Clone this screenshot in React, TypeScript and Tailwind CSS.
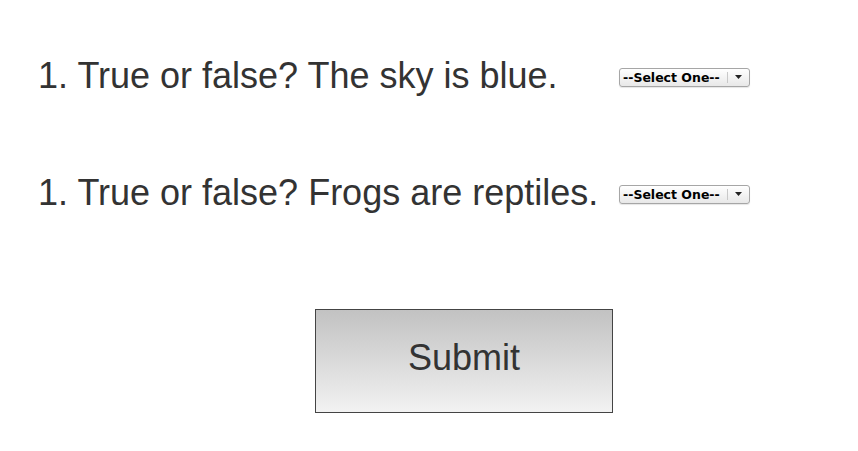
import React from 'react';

const SelectBox: React.FC = () => (
  <div className="mt-[2px] flex h-[19px] w-[131px] items-stretch rounded-[3px] border border-[#a6a6a6] bg-gradient-to-b from-white to-[#e8e8e8] font-['DejaVu_Sans',Verdana,sans-serif] text-[12.5px] font-bold leading-none text-black shadow-[0_1px_1px_rgba(0,0,0,0.1)]">
    <div className="flex flex-1 items-center pl-[3px] pt-[2px]">--Select One--</div>
    <div className="my-[3px] w-px bg-[#c8c8c8]" />
    <div className="flex w-[21px] items-center justify-center">
      <svg width="7" height="4" viewBox="0 0 7 4">
        <polygon points="0,0 7,0 3.5,4" fill="#222" />
      </svg>
    </div>
  </div>
);

const questions = [
  'The sky is blue.',
  'Frogs are reptiles.',
];

export default function App() {
  return (
    <div className="h-[451px] w-[858px] bg-white font-['Liberation_Sans',Arial,sans-serif] text-[#333]">
      <div className="pl-[38px] pt-[55px]">
        {questions.map((q, i) => (
          <div key={i} className="mb-[75px] flex h-[42px] items-center">
            <div className="w-[581px] text-[36px] leading-none">1. True or false? {q}</div>
            <SelectBox />
          </div>
        ))}
      </div>
      <div className="flex justify-center pl-[70px] pt-[20px]">
        <button className="h-[104px] w-[298px] border border-[#444] bg-gradient-to-b from-[#c2c2c2] to-[#f2f2f2] pb-[6px] text-[36px] text-[#333]">
          Submit
        </button>
      </div>
    </div>
  );
}
